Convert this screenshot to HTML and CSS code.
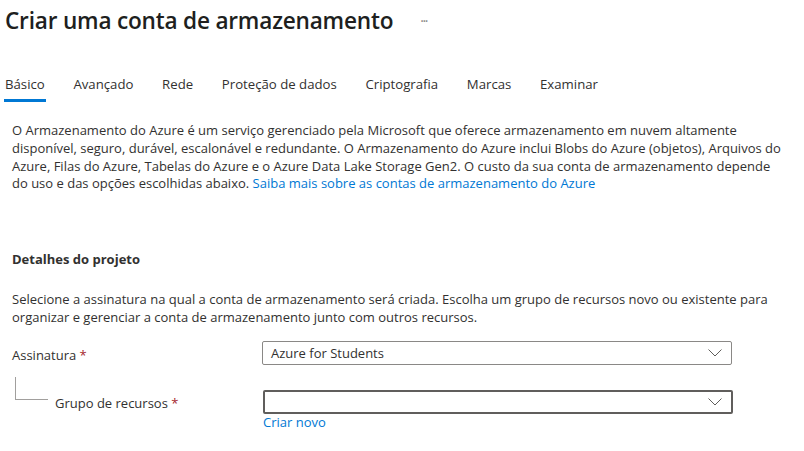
FILE: index.html
```html
<!DOCTYPE html>
<html lang="pt">
<head>
<meta charset="utf-8">
<link rel="stylesheet" href="styles.css">
</head>
<body>
<div class="page">
  <header class="title-row">
    <h1 class="title">Criar uma conta de armazenamento</h1>
    <span class="more">···</span>
  </header>
  <nav class="tabs">
    <span class="tab active">Básico</span>
    <span class="tab">Avançado</span>
    <span class="tab">Rede</span>
    <span class="tab">Proteção de dados</span>
    <span class="tab">Criptografia</span>
    <span class="tab">Marcas</span>
    <span class="tab">Examinar</span>
  </nav>
  <section class="content">
    <p class="intro">O Armazenamento do Azure é um serviço gerenciado pela Microsoft que oferece armazenamento em nuvem altamente<br>disponível, seguro, durável, escalonável e redundante. O Armazenamento do Azure inclui Blobs do Azure (objetos), Arquivos do<br>Azure, Filas do Azure, Tabelas do Azure e o Azure Data Lake Storage Gen2. O custo da sua conta de armazenamento depende<br>do uso e das opções escolhidas abaixo. <a class="link">Saiba mais sobre as contas de armazenamento do Azure</a></p>
    <h2 class="section-title">Detalhes do projeto</h2>
    <p class="desc">Selecione a assinatura na qual a conta de armazenamento será criada. Escolha um grupo de recursos novo ou existente para<br>organizar e gerenciar a conta de armazenamento junto com outros recursos.</p>
    <div class="field">
      <label class="label">Assinatura <span class="req">*</span></label>
      <div class="select">
        <span class="value">Azure for Students</span>
        <svg class="chev" width="14" height="8" viewBox="0 0 14 8"><path d="M0.5 0.5 L7 7 L13.5 0.5" fill="none" stroke="#605e5c" stroke-width="1"/></svg>
      </div>
    </div>
    <div class="field sub">
      <div class="label-wrap">
        <span class="tree"></span>
        <label class="label">Grupo de recursos <span class="req">*</span></label>
      </div>
      <div class="control">
        <div class="select focused">
          <span class="value"></span>
          <svg class="chev" width="14" height="8" viewBox="0 0 14 8"><path d="M0.5 0.5 L7 7 L13.5 0.5" fill="none" stroke="#605e5c" stroke-width="1"/></svg>
        </div>
        <a class="link small">Criar novo</a>
      </div>
    </div>
  </section>
</div>
</body>
</html>
```
FILE: styles.css
```css
* { box-sizing: border-box; }
html, body { margin: 0; padding: 0; background: #fff; }
body {
  font-family: "Open Sans", "Noto Sans", sans-serif;
  color: #323130;
  font-size: 13px;
}
.page { width: 804px; height: 451px; overflow: hidden; }
.title-row {
  display: flex;
  align-items: center;
  height: 40px;
  padding-left: 5px;
}
.title {
  margin: 0;
  font-size: 22.6px;
  font-weight: 600;
  letter-spacing: -0.2px;
  color: #201f1e;
}
.more {
  margin-left: 27px;
  font-size: 14px;
  color: #8a8886;
  letter-spacing: -1.5px;
  line-height: 14px;
  padding-top: 2px;
}
.tabs {
  display: flex;
  margin-top: 30px;
  padding-left: 5px;
  height: 32px;
}
.tab {
  font-size: 13.2px;
  height: 32px;
  line-height: 28px;
  margin-right: 28.7px;
  color: #323130;
  position: relative;
}
.tab.active::after {
  content: "";
  position: absolute;
  left: -1px; right: -1px; bottom: 0;
  height: 3px;
  background: #0078d4;
}
.content { padding: 0 12px; }
.intro {
  margin: 20px 0 0;
  line-height: 17.8px;
  width: 790px;
  white-space: nowrap;
}
.link { color: #0078d4; text-decoration: none; }
.section-title {
  margin: 57px 0 0;
  font-size: 13px;
  font-weight: 700;
  line-height: 18px;
}
.desc {
  margin: 22px 0 0;
  line-height: 18px;
  width: 790px;
  white-space: nowrap;
}
.field {
  display: flex;
  align-items: flex-start;
  margin-top: 15px;
}
.label {
  width: 250px;
  line-height: 24px;
  padding-top: 2px;
  display: block;
}
.req { color: #a4262c; }
.select {
  width: 470px;
  height: 24px;
  border: 1px solid #8a8886;
  border-radius: 2px;
  display: flex;
  align-items: center;
  justify-content: space-between;
  padding: 0 9px 0 8px;
}
.select.focused { border: 2px solid #605e5c; }
.chev { display: block; }
.field.sub { margin-top: 23px; }
.label-wrap {
  width: 251px;
  display: flex;
  align-items: flex-start;
}
.tree {
  display: block;
  width: 33px;
  height: 23px;
  margin: -13px 0 0 3px;
  border-left: 1px solid #a19f9d;
  border-bottom: 1px solid #a19f9d;
}
.label-wrap .label { width: auto; margin-left: 7px; padding-top: 1px; }
.control { display: flex; flex-direction: column; }
.link.small { line-height: 18px; margin-top: -1px; }
```
